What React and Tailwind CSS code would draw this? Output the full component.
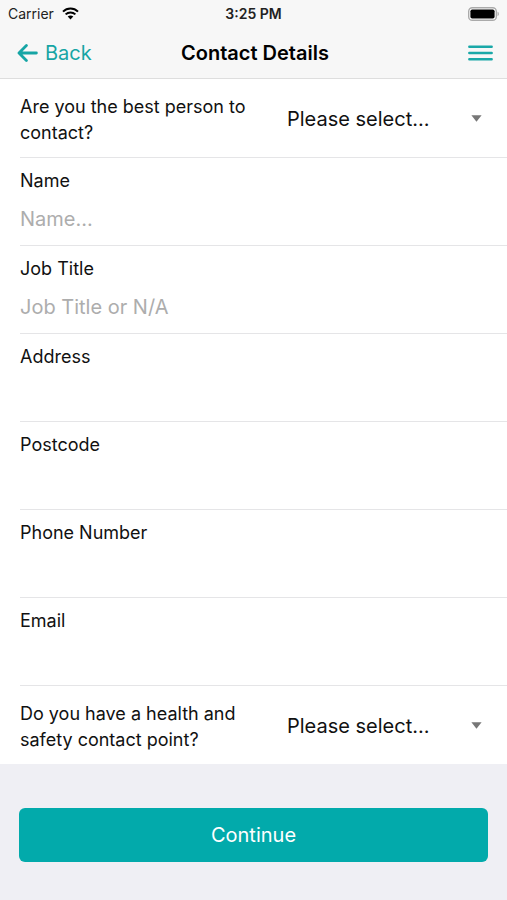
import React from "react";

const fields = [
  { id: "name", label: "Name", placeholder: "Name...", type: "text" },
  { id: "job", label: "Job Title", placeholder: "Job Title or N/A", type: "text" },
  { id: "address", label: "Address", placeholder: "", type: "text" },
  { id: "postcode", label: "Postcode", placeholder: "", type: "text" },
  { id: "phone", label: "Phone Number", placeholder: "", type: "tel" },
  { id: "email", label: "Email", placeholder: "", type: "email" },
];

function StatusBar() {
  return (
    <div className="grid h-[27px] grid-cols-3 items-center px-2 text-[14px] text-[#222]">
      <div className="flex items-center gap-2">
        <span>Carrier</span>
        <svg width="17" height="13" viewBox="0 0 17 13" aria-hidden="true">
          <g fill="none" stroke="#000" strokeWidth="2">
            <path d="M1 4.6C5.2 .4 11.8 .4 16 4.6" />
            <path d="M3.6 7.4C6.4 4.7 10.6 4.7 13.4 7.4" />
          </g>
          <path d="M5.7 9.6C7.3 8.2 9.7 8.2 11.3 9.6L8.5 12.5Z" />
        </svg>
      </div>
      <span className="text-center font-semibold whitespace-nowrap">3:25 PM</span>
      <svg className="justify-self-end" width="31" height="14" viewBox="0 0 31 14" aria-hidden="true">
        <rect x=".7" y=".7" width="27.6" height="12.6" rx="3.6" fill="#fff" stroke="#aaa" strokeWidth="1.4" />
        <rect x="2.4" y="2.4" width="24.2" height="9.2" rx="1.8" />
        <path d="M29.6 4.8c1.5.6 1.5 3.8 0 4.4Z" fill="#999" />
      </svg>
    </div>
  );
}

function NavBar() {
  return (
    <div className="grid h-[51px] grid-cols-[1fr_auto_1fr] items-center pr-[14px] pl-[17px]">
      <button type="button" className="flex items-center gap-[7px] justify-self-start text-[20px] text-[#16a5a5]">
        <svg width="21" height="18" viewBox="0 0 21 18" fill="none" stroke="currentColor" strokeWidth="2.8" strokeLinecap="round" strokeLinejoin="round" aria-hidden="true">
          <path d="M19.4 9H2.5M9.4 1.6 2 9l7.4 7.4" />
        </svg>
        Back
      </button>
      <h1 className="text-[20px] font-semibold text-black">Contact Details</h1>
      <button type="button" aria-label="Menu" className="justify-self-end text-[#1aa8a8]">
        <svg width="25" height="16" viewBox="0 0 25 16" fill="none" stroke="currentColor" strokeWidth="2.4" strokeLinecap="round" aria-hidden="true">
          <path d="M1.3 1.8h22.4M1.3 8h22.4M1.3 14.2h22.4" />
        </svg>
      </button>
    </div>
  );
}

function SelectRow({ id, label }) {
  return (
    <div className="box-content grid min-h-[78px] grid-cols-[1fr_220px] items-center">
      <label htmlFor={id} className="pt-1 pr-9 text-[18px] leading-[26px]">{label}</label>
      <div className="grid items-center pt-px">
        <select id={id} className="col-start-1 row-start-1 h-11 w-full appearance-none bg-transparent pr-12 text-[20px]">
          <option>Please select...</option>
          <option>Yes</option>
          <option>No</option>
        </select>
        <svg className="pointer-events-none col-start-1 row-start-1 mr-[25px] justify-self-end" width="11" height="7" viewBox="0 0 11 7" fill="#777" aria-hidden="true">
          <path d="M.4.3h10.2L5.5 6.7Z" />
        </svg>
      </div>
    </div>
  );
}

function FieldRow({ id, label, type, placeholder }) {
  return (
    <div className="flex h-[88px] flex-col pt-[10px]">
      <label htmlFor={id} className="text-[18px] leading-[26px]">{label}</label>
      <input id={id} type={type} placeholder={placeholder} className="mt-[5px] h-10 w-full bg-transparent text-[20px] outline-none placeholder:text-[#adadad]" />
    </div>
  );
}

export default function App() {
  return (
    <div className="flex min-h-screen flex-col bg-[#efeff4] font-['Inter','Liberation_Sans',sans-serif] text-[#111]">
      <header className="border-b border-[#dedede] bg-[#f7f7f7]">
        <StatusBar />
        <NavBar />
      </header>
      <form className="flex flex-col" onSubmit={(event) => event.preventDefault()}>
        <div className="divide-y divide-[#e5e5e7] bg-white pl-5">
          <SelectRow id="best" label="Are you the best person to contact?" />
          {fields.map((field) => (
            <FieldRow key={field.id} {...field} />
          ))}
          <SelectRow id="safety" label="Do you have a health and safety contact point?" />
        </div>
        <div className="px-[19px] pt-11 pb-[38px]">
          <button type="submit" className="h-[54px] w-full rounded-md bg-[#02aaab] text-[20px] text-white">
            Continue
          </button>
        </div>
      </form>
    </div>
  );
}
